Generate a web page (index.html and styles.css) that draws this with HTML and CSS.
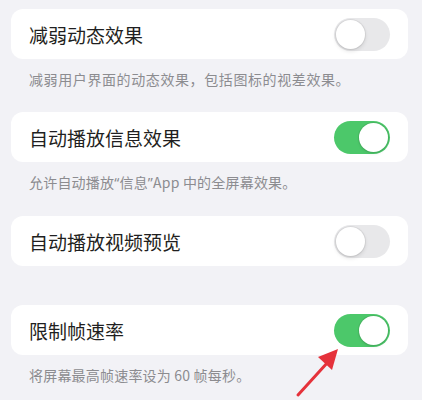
FILE: index.html
```html
<!DOCTYPE html>
<html lang="zh-CN">
<head>
<meta charset="utf-8">
<link rel="stylesheet" href="styles.css">
</head>
<body>
<div class="page">
  <section class="group has-footer">
    <div class="card">
      <span class="title">减弱动态效果</span>
      <span class="toggle"><span class="knob"></span></span>
    </div>
    <p class="footer wide">减弱用户界面的动态效果，包括图标的视差效果。</p>
  </section>
  <section class="group has-footer">
    <div class="card">
      <span class="title">自动播放信息效果</span>
      <span class="toggle on"><span class="knob"></span></span>
    </div>
    <p class="footer">允许自动播放<span class="q">“</span>信息<span class="q">”</span>App 中的全屏幕效果。</p>
  </section>
  <section class="group">
    <div class="card">
      <span class="title">自动播放视频预览</span>
      <span class="toggle"><span class="knob"></span></span>
    </div>
  </section>
  <section class="group has-footer">
    <div class="card">
      <span class="title">限制帧速率</span>
      <span class="toggle on"><span class="knob"></span></span>
    </div>
    <p class="footer">将屏幕最高帧速率设为 60 帧每秒。</p>
  </section>
  <svg class="arrow" width="60" height="60" viewBox="0 0 60 60">
    <line x1="6" y1="53" x2="36" y2="20" stroke="#e5323b" stroke-width="3" stroke-linecap="round"/>
    <polygon points="46,7 26,15 40,28" fill="#e5323b"/>
  </svg>
</div>
</body>
</html>
```
FILE: styles.css
```css
html, body {
  margin: 0;
  padding: 0;
  background: #f2f2f6;
}
body {
  font-family: "Noto Sans CJK SC", "Noto Sans", sans-serif;
  width: 422px;
  height: 400px;
  overflow: hidden;
}
.page {
  position: relative;
  padding: 9px 14px 0 11px;
}
.group {
  margin-bottom: 39px;
}
.group.has-footer {
  margin-bottom: 23px;
}
.card {
  height: 50px;
  background: #ffffff;
  border-radius: 12px;
  display: flex;
  align-items: center;
  justify-content: space-between;
  padding: 0 18px 0 18px;
}
.title {
  font-size: 19px;
  color: #1f1f21;
}
.toggle {
  width: 56px;
  height: 33px;
  border-radius: 17px;
  background: #e8e8ea;
  position: relative;
  flex: none;
  margin-top: 1px;
}
.toggle .knob {
  position: absolute;
  top: 2px;
  left: 2px;
  width: 29px;
  height: 29px;
  border-radius: 50%;
  background: #ffffff;
  box-shadow: 0 0 0 1px rgba(0,0,0,0.06), 0 2px 4px rgba(0,0,0,0.12);
}
.toggle.on {
  background: #4cc86a;
}
.toggle.on .knob {
  left: 25px;
  box-shadow: 0 0 0 1px rgba(60,150,80,0.35), 0 2px 3px rgba(0,0,0,0.08);
}
.footer {
  margin: 0;
  padding: 10px 0 0 18px;
  line-height: 20px;
  font-size: 14px;
  letter-spacing: 0.2px;
  color: #8c8c90;
}
.footer.wide {
  letter-spacing: 0.6px;
}
.footer .q {
  font-family: "Noto Sans", sans-serif;
}
.arrow {
  position: absolute;
  left: 292px;
  top: 342px;
}
```
